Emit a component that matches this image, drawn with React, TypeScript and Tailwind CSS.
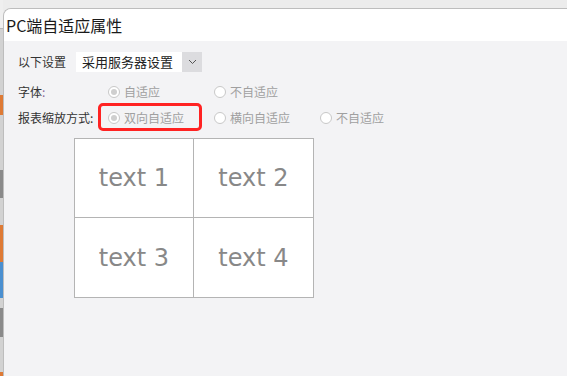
import React from "react";

const font = { fontFamily: '"Microsoft YaHei", "Noto Sans CJK SC", sans-serif' };

function Radio({ label, checked }: { label: string; checked?: boolean }) {
  return (
    <div className="flex items-center gap-[4px] text-[12px] leading-[16px] text-[#a0a0a0]">
      <span className="w-[12px] h-[12px] rounded-full border border-[#c8c8c8] bg-white flex items-center justify-center">
        {checked && <span className="w-[6px] h-[6px] rounded-full bg-[#cfcfcf]" />}
      </span>
      <span>{label}</span>
    </div>
  );
}

export default function App() {
  const strip = [
    { h: 28, c: "bg-[#efefef]" },
    { h: 1, c: "bg-[#b8b8b8]" },
    { h: 66, c: "bg-[#d2d2d2]" },
    { h: 20, c: "bg-[#de7a35]" },
    { h: 55, c: "bg-[#d2d2d2]" },
    { h: 28, c: "bg-[#8a8a8a]" },
    { h: 27, c: "bg-[#d2d2d2]" },
    { h: 37, c: "bg-[#de7a35]" },
    { h: 36, c: "bg-[#4a8fd0]" },
    { h: 10, c: "bg-[#d2d2d2]" },
    { h: 29, c: "bg-[#8a8a8a]" },
    { h: 35, c: "bg-[#d2d2d2]" },
    { h: 4, c: "bg-[#de7a35]" },
  ];

  return (
    <div className="w-[567px] h-[376px] flex bg-[#ececec] overflow-hidden" style={font}>
      <div className="w-[3px] flex flex-col shrink-0">
        {strip.map((s, i) => (
          <div key={i} className={s.c} style={{ height: s.h }} />
        ))}
      </div>
      <div className="flex-1 mt-[8px] flex flex-col rounded-tl-[8px] border-l border-t border-[#bdbdbd] overflow-hidden">
        <div className="h-[32px] bg-white flex items-center pl-[2px] text-[16px] text-[#1a1a1a]">
          PC端自适应属性
        </div>
        <div className="flex-1 bg-[#f3f3f5] pl-[14px] pt-[11px] text-[12px] text-[#333]">
          <div className="flex items-center h-[20px]">
            <span className="w-[58px]">以下设置</span>
            <div className="flex h-[20px] w-[126px] bg-white">
              <span className="flex-1 pl-[6px] leading-[20px] text-[13px] text-[#222]">采用服务器设置</span>
              <span className="w-[20px] bg-[#dcdcdf] flex items-center justify-center">
                <svg width="9" height="6" viewBox="0 0 9 6">
                  <path d="M1 1l3.5 3.5L8 1" fill="none" stroke="#555" strokeWidth="1" />
                </svg>
              </span>
            </div>
          </div>
          <div className="flex items-center h-[20px] mt-[10px]">
            <span className="w-[90px]">字体<span className="text-[#8a6a9a]">:</span></span>
            <div className="w-[106px]">
              <Radio label="自适应" checked />
            </div>
            <Radio label="不自适应" />
          </div>
          <div className="flex items-center h-[20px] mt-[6px]">
            <span className="w-[90px]">报表缩放方式:</span>
            <div className="w-[106px] relative">
              <Radio label="双向自适应" checked />
              <div className="absolute left-[-10px] top-[-7px] w-[104px] h-[28px] border-[3px] border-[#ff2222] rounded-[5px]" />
            </div>
            <div className="w-[106px]">
              <Radio label="横向自适应" />
            </div>
            <Radio label="不自适应" />
          </div>
          <div
            className="mt-[10px] ml-[56px] w-[240px] grid grid-cols-2 border border-[#b4b4b4] bg-white text-[24px] text-[#888]"
            style={{ fontFamily: '"DejaVu Sans", Verdana, sans-serif' }}
          >
            <div className="h-[79px] flex items-center justify-center border-r border-b border-[#b4b4b4]">text 1</div>
            <div className="h-[79px] flex items-center justify-center border-b border-[#b4b4b4]">text 2</div>
            <div className="h-[79px] flex items-center justify-center border-r border-[#b4b4b4]">text 3</div>
            <div className="h-[79px] flex items-center justify-center">text 4</div>
          </div>
        </div>
      </div>
    </div>
  );
}
